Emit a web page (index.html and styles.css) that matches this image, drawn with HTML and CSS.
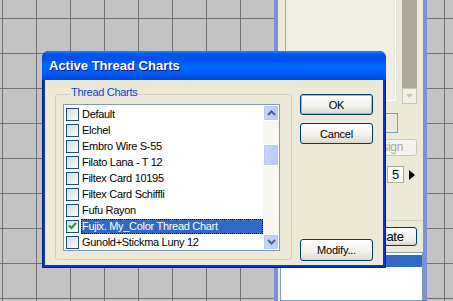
FILE: index.html
```html
<!DOCTYPE html>
<html lang="en">
<head>
    <meta charset="UTF-8">
    <title>Active Thread Charts</title>
    <link rel="stylesheet" href="styles.css">
</head>
<body>
<div class="desktop">

    <!-- window behind the dialog -->
    <div class="bgwin">
        <div class="bg-top">
            <div class="bg-panel"></div>
            <div class="bg-scroll">
                <div class="bg-track"></div>
                <div class="bg-sbtn">
                    <svg width="7" height="4" viewBox="0 0 7 4"><path d="M0 0h7L3.5 4z" fill="#c9c7ba"/></svg>
                </div>
            </div>
        </div>
        <div class="bg-edit"></div>
        <div class="bg-btn disabled">Assign</div>
        <div class="bg-spin">
            <span class="spin-val">5</span>
            <svg width="6" height="10" viewBox="0 0 6 10"><path d="M0 0l6 5-6 5z" fill="#000"/></svg>
        </div>
        <div class="bg-sep"></div>
        <div class="bg-btn update">Update</div>
        <div class="bg-list">
            <div class="bg-sel"></div>
        </div>
    </div>

    <!-- dialog -->
    <div class="dialog">
        <div class="titlebar">Active Thread Charts</div>
        <div class="client">
            <fieldset class="group">
                <legend>Thread Charts</legend>
                <div class="listbox">
                    <ul class="items">
                        <li><span class="check"></span><span class="label">Default</span></li>
                        <li><span class="check"></span><span class="label">Elchel</span></li>
                        <li><span class="check"></span><span class="label">Embro Wire S-55</span></li>
                        <li><span class="check"></span><span class="label">Filato Lana - T 12</span></li>
                        <li><span class="check"></span><span class="label">Filtex Card 10195</span></li>
                        <li><span class="check"></span><span class="label">Filtex Card Schiffli</span></li>
                        <li><span class="check"></span><span class="label">Fufu Rayon</span></li>
                        <li class="selected"><span class="check on"><svg width="9" height="8" viewBox="0 0 9 8"><path d="M1 3.5l2.5 2.5 4.5-5" fill="none" stroke="#21a121" stroke-width="2"/></svg></span><span class="label">Fujix. My_Color Thread Chart</span></li>
                        <li><span class="check"></span><span class="label">Gunold+Stickma Luny 12</span></li>
                    </ul>
                    <div class="vscroll">
                        <div class="sb-btn">
                            <svg width="9" height="6" viewBox="0 0 9 6"><path d="M1 5l3.5-3.5L8 5" fill="none" stroke="#4d6185" stroke-width="2"/></svg>
                        </div>
                        <div class="sb-track">
                            <div class="sb-thumb"></div>
                        </div>
                        <div class="sb-btn">
                            <svg width="9" height="6" viewBox="0 0 9 6"><path d="M1 1l3.5 3.5L8 1" fill="none" stroke="#4d6185" stroke-width="2"/></svg>
                        </div>
                    </div>
                </div>
            </fieldset>
            <div class="buttons">
                <button class="btn default">OK</button>
                <button class="btn">Cancel</button>
                <button class="btn modify">Modify...</button>
            </div>
        </div>
    </div>

</div>
</body>
</html>
```

FILE: styles.css
```css
/*初始化*/
html, body {
    margin: 0;
    padding: 0;
}
ul, li {
    margin: 0;
    padding: 0;
    list-style: none;
}

/*1.桌面网格*/
.desktop {
    width: 453px;
    height: 301px;
    position: relative;
    overflow: hidden;
    background-color: #c3c3c3;
    background-image:
        linear-gradient(to right, #727272 1px, transparent 1px),
        linear-gradient(to bottom, #727272 1px, transparent 1px);
    background-size: 34px 35px;
    background-position: 2px 18px;
    font-family: "Liberation Sans", Arial, sans-serif;
    font-size: 11px;
    letter-spacing: -0.3px;
    color: #000;
}

/*2.后面的窗口*/
.bgwin {
    position: absolute;
    left: 274px;
    top: 0;
    width: 145px;
    height: 301px;
    background: #ece9d8;
    border-left: 4px solid #7d8fd9;
    border-right: 4px solid #7d8fd9;
    display: flex;
    flex-direction: column;
}
.bg-top {
    display: flex;
    gap: 6px;
    margin-left: 7px;
}
.bg-panel {
    width: 109px;
    height: 100px;
    background: #f0eee3;
    border-left: 1px solid #aca899;
    border-right: 1px solid #fff;
    border-bottom: 1px solid #fff;
}
.bg-scroll {
    width: 15px;
    display: flex;
    flex-direction: column;
}
.bg-track {
    height: 88px;
    background: #aeaa9b;
}
.bg-sbtn {
    background: #f1efe6;
    border: 1px solid #c9c7ba;
    box-sizing: border-box;
    height: 16px;
    display: flex;
    align-items: center;
    justify-content: center;
}
.bg-edit {
    margin: 9px 0 0 26px;
    width: 92px;
    height: 18px;
    border: 1px solid #7f9db9;
}
.bg-btn {
    margin: 6px 0 0 77px;
    width: 62px;
    height: 17px;
    border: 1px solid #003c74;
    border-radius: 3px;
    background: linear-gradient(#fefefe, #ecebe6 80%, #d6d0c5);
    box-sizing: border-box;
    text-align: center;
    line-height: 15px;
}
.bg-btn.disabled {
    border-color: #c9c7ba;
    color: #aca899;
    background: #f4f3ee;
    font-size: 12px;
}
.bg-spin {
    margin: 10px 0 0 109px;
    display: flex;
    align-items: center;
    gap: 5px;
}
.spin-val {
    width: 17px;
    height: 17px;
    box-sizing: border-box;
    border: 1px solid #aca899;
    background: #fbfaf6;
    font-size: 13px;
    line-height: 15px;
    text-align: center;
}
.bg-sep {
    margin: 37px 0 0 100px;
    height: 1px;
    background: #d0d0bf;
}
.bg-btn.update {
    margin: 6px 0 0 72px;
    width: 67px;
    height: 19px;
    line-height: 17px;
    font-size: 13px;
}
.bg-list {
    margin: 6px 0 0 2px;
    flex: 1;
    background: #fff;
    border: 1px solid #7f9db9;
    padding: 2px 0 0 0;
}
.bg-sel {
    height: 12px;
    background: #316ac5;
}

/*3.对话框*/
.dialog {
    position: absolute;
    left: 42px;
    top: 51px;
    width: 344px;
    height: 217px;
    background: #0831d9;
    border-radius: 7px 7px 0 0;
    display: flex;
    flex-direction: column;
    box-shadow: 0 0 0 1px #0a246a inset;
}
.titlebar {
    height: 29px;
    border-radius: 7px 7px 0 0;
    background: linear-gradient(#0997ff 0, #0053ee 3px, #0050ee 8px, #0066ff 15px, #0058f6 24px, #0047d6 29px);
    color: #fff;
    font-weight: bold;
    font-size: 13px;
    letter-spacing: 0;
    line-height: 29px;
    padding-left: 7px;
    text-shadow: 1px 1px #0f1089;
}
.client {
    flex: 1;
    margin: 0 3px 3px;
    background: #ece9d8;
    display: flex;
    padding: 0 0 0 10px;
    gap: 8px;
}

/*4.分组框*/
.group {
    margin: 6px 0 0;
    padding: 1px 11px 8px 7px;
    align-self: flex-start;
    border: 1px solid #d0d0bf;
    border-radius: 3px;
}
.group legend {
    color: #0046d5;
    padding: 0 1px 4px;
    margin-left: 7px;
    line-height: 13px;
}

/*5.列表*/
.listbox {
    display: flex;
    width: 215px;
    height: 145px;
    border: 1px solid #7f9db9;
    background: #fff;
}
.items {
    flex: 1;
    padding-top: 1px;
}
.items li {
    height: 16px;
    display: flex;
    align-items: center;
    padding-left: 2px;
}
.check {
    width: 11px;
    height: 11px;
    border: 1px solid #1c5180;
    background: linear-gradient(135deg, #dcdcd7, #fbfbf9);
    display: flex;
    align-items: center;
    justify-content: center;
    flex-shrink: 0;
}
.label {
    margin-left: 2px;
    padding: 0 1px;
    height: 15px;
    line-height: 15px;
    white-space: nowrap;
}
.selected .label {
    flex: 1;
    background: #316ac5;
    color: #fff;
    outline: 1px dotted #000;
    outline-offset: -1px;
}

/*6.滚动条*/
.vscroll {
    width: 16px;
    background: #f7f6f1;
    display: flex;
    flex-direction: column;
}
.sb-btn, .sb-thumb {
    height: 16px;
    box-sizing: border-box;
    border: 1px solid #fff;
    border-radius: 2px;
    background: linear-gradient(to right, #c8d7fa, #b9cbf7);
    box-shadow: 0 0 0 1px #b6c9f4 inset;
    display: flex;
    align-items: center;
    justify-content: center;
}
.sb-track {
    flex: 1;
    padding-top: 23px;
}
.sb-thumb {
    height: 22px;
}

/*7.按钮*/
.buttons {
    display: flex;
    flex-direction: column;
    padding-top: 14px;
}
.btn {
    width: 73px;
    height: 21px;
    margin-bottom: 8px;
    border: 1px solid #003c74;
    border-radius: 3px;
    background: linear-gradient(#ffffff, #f1f0ea 60%, #dcd8cd);
    font-family: "Liberation Sans", Arial, sans-serif;
    font-size: 11px;
    letter-spacing: -0.2px;
    padding: 0;
    color: #000;
}
.btn.default {
    box-shadow: 0 0 0 1px #98b8ea inset;
}
.btn.modify {
    margin-top: auto;
    margin-bottom: 4px;
    height: 22px;
}
```
